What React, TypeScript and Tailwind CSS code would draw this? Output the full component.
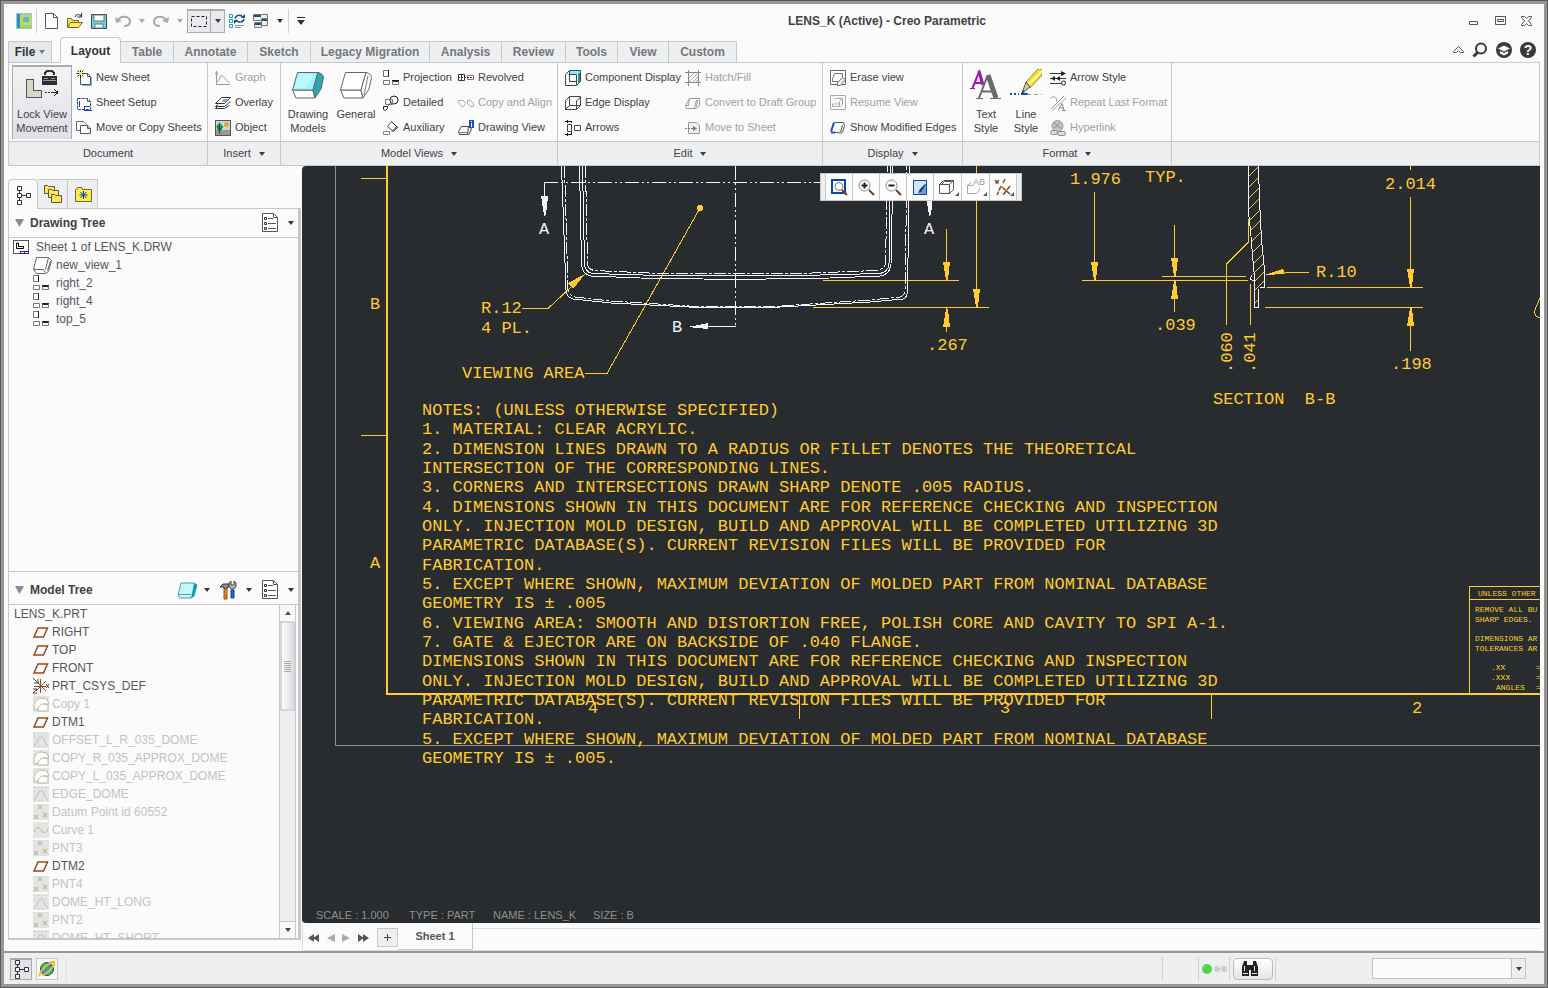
import React from "react";
import clsx from "clsx";

type IconName = keyof typeof ICONS;

/** 1 Icons, drawn on a 16 x 16 pixel grid */
const ICONS = {
    newSheet: (
        <>
            <path d="M4.500 3.500h7l3 3v8h-10z" fill="#fff" stroke="#555" />
            <path d="M11.500 3.500v3h3" fill="none" stroke="#555" />
            <path d="M6 15.500h10M15.500 7v8" stroke="#7fb0e0" />
            <path d="M0.500 3.500h8M4.500 0v8M1.500 0.500l6 6M7.500 0.500l-6 6" stroke="#222" />
            <rect x="3" y="2" width="3" height="3" fill="#ffe600" />
        </>
    ),
    sheetSetup: (
        <>
            <path d="M1.500 3.500h10l3 3v8h-13z" fill="#fff" stroke="#1d3f9e" strokeDasharray="3 1" />
            <path d="M11.500 3.500v3h3" fill="none" stroke="#555" />
            <path d="M8 15.500h8M8 11.500h6M8.500 11v4M3.500 6v6" stroke="#1d3f9e" />
        </>
    ),
    copySheets: (
        <>
            <path d="M0.500 1.500h7l3 3v6h-10z" fill="#fff" stroke="#666" />
            <path d="M4.500 5.500h7l3 3v5h-10z" fill="#fff" stroke="#555" />
            <path d="M11.500 5.500v3h3" fill="none" stroke="#555" />
        </>
    ),
    graph: (
        <path d="M1.500 1v13.500H15M0.500 4.500l1-3 1 3M2.500 12l4-7 3 3 5 5" fill="none" stroke="#999" />
    ),
    overlay: (
        <>
            <path d="M6.500 2.500h9l-6 6h-9z" fill="#fff" stroke="#333" />
            <path d="M8 4h5l-2 3H7z" fill="#72aee6" />
            <path d="M3 9.500l-2.500 2h9l6-5M2 12l-1.500 1.500h9l5-3" fill="none" stroke="#333" />
        </>
    ),
    object: (
        <>
            <rect x="0.500" y="0.500" width="15" height="15" fill="#c7d8e8" stroke="#555" />
            <rect x="1" y="10" width="14" height="5" fill="#999" />
            <circle cx="11.500" cy="4.500" r="2.500" fill="#f6a020" />
            <path d="M4.500 2l3 4-1 5h-4l-1-5z" fill="#27a844" />
            <path d="M4.500 4v10M2 6l3 4 3-4" stroke="#0a5c20" fill="none" />
        </>
    ),
    projection: (
        <>
            <path d="M0.500 0.500h5v6h-5zM0.500 10.500h6v4h-6z" fill="#fff" stroke="#777" />
            <path d="M5.500 0v7M9 10.500h7M9 11.500h7" stroke="#222" />
            <path d="M9.500 11v3.500h6V11" fill="none" stroke="#777" />
        </>
    ),
    detailed: (
        <>
            <circle cx="11" cy="5" r="4" fill="none" stroke="#222" />
            <path d="M2.500 4.500h7v5h-7z" fill="none" stroke="#777" />
            <path d="M0.500 11.500h4v2l-2 2-2-1z" fill="#fff" stroke="#222" />
            <path d="M5 11l3-3" stroke="#777" />
        </>
    ),
    auxiliary: (
        <>
            <path d="M4.500 6.500l4-5 6 6-4 4z" fill="#fff" stroke="#444" />
            <path d="M9 11.500l5-5M8.500 1.500l6 6" stroke="#222" />
            <path d="M0.500 11.500h6v3h-6z" fill="#fff" stroke="#888" />
        </>
    ),
    revolved: (
        <>
            <path d="M0.500 4.500h6v6h-6z" fill="#fff" stroke="#333" />
            <path d="M3.500 4v7" stroke="#333" />
            <path d="M9.500 5.500h6v4h-6z" fill="#fff" stroke="#777" />
            <path d="M0 7.500h16" stroke="#8a1a1a" strokeDasharray="2 1" />
        </>
    ),
    copyAlign: (
        <path d="M0.500 5.500h5l2 3-2 3h-2l-3-4zM9.500 5.500h3l3 3v3h-3l-3-3z" fill="none" stroke="#aaa" />
    ),
    drawingView: (
        <>
            <path d="M3.500 6.500h7l-1 8h-8l-1-3zM10.500 6.500l3 2-2 5-2 1" fill="#fff" stroke="#444" />
            <path d="M0 12.500h9" stroke="#777" />
            <rect x="11" y="0" width="5" height="8" fill="#1d4fc4" />
            <path d="M13.500 1v1M13.500 3v4" stroke="#fff" />
        </>
    ),
    component: (
        <>
            <path d="M4 1h12v3H4z" fill="#7ff3f7" />
            <path d="M13 3h2v9l-2 2z" fill="#0d9aa0" />
            <path d="M0.500 4.500l4-4h11v11l-4 4h-11zM4.500 0.500v11h7M3.500 4.500h8v11" fill="none" stroke="#444" />
        </>
    ),
    edge: (
        <path d="M0.500 5.500l4-4h11v9l-4 4h-11zM4.500 1.500v9h11M4.500 10.500l-4 4M11.500 14V6l4-4" fill="none" stroke="#444" />
    ),
    arrows: (
        <>
            <path d="M2.500 4.500h4v7h-4zM9.500 5.500h6v5h-6z" fill="#fff" stroke="#444" />
            <path d="M0 1.500h7M0 14.500h7M2.500 0v3M2.500 13v3M6.500 1v2M6.500 12v2" stroke="#111" />
        </>
    ),
    hatch: (
        <>
            <path d="M0 2.500h16M0 12.500h16M3.500 0v16M13.500 0v16" stroke="#888" />
            <path d="M4 8l5-5M4 12l9-9M8 12l5-5M11 12l2-2" stroke="#aaa" />
        </>
    ),
    draft: (
        <path d="M4.500 3.500h10v7l-3 3H1.500l-1-3zM4.500 3.500l-1 7H0.500M9.500 13l2-8M12.500 5l-1 7" fill="none" stroke="#999" />
    ),
    moveSheet: (
        <>
            <path d="M3.500 2.500h8l3 3v8h-11z" fill="#f0f0f0" stroke="#999" />
            <path d="M0 8.500h9" stroke="#777" strokeDasharray="2 1" />
            <path d="M8 6v5l4-2.500z" fill="#777" />
        </>
    ),
    erase: (
        <>
            <path d="M0.500 0.500h15v14h-15z" fill="#fff" stroke="#666" />
            <path d="M4.500 3.500h8v6l-2 2H2.500V9z" fill="none" stroke="#777" />
            <path d="M7.500 12.500l5-5 3 2-5 6h-3z" fill="#e8eef6" stroke="#66758c" />
        </>
    ),
    resume: (
        <path d="M0.500 0.500h15v14h-15zM4.500 3.500h8v6l-2 2H2.500V9h7M12.500 3.500l-3 3v5" fill="#fafafa" stroke="#aaa" />
    ),
    modified: (
        <>
            <path d="M4.500 2.500h9l1 3-2 7-3 1M1.500 12.500h8M10.500 12l2-7" fill="none" stroke="#555" />
            <path d="M4 2.500l-3 9M1 12.500h4" stroke="#1d4fc4" strokeWidth="2" />
        </>
    ),
    arrowStyle: (
        <>
            <path d="M0 3.500h14M0 8.500h16M0 13.500h11" stroke="#333" />
            <path d="M11 1l5 2.500-5 2.500zM1 8.500L5 6v5zM6 8.500L10 6v5z" fill="#222" />
            <circle cx="13.500" cy="13" r="2" fill="#fff" stroke="#222" />
        </>
    ),
    repeat: (
        <>
            <path d="M0.500 3.500l3-2 3 2v3M1 14l13-13M3 15L16 3" fill="none" stroke="#999" />
            <path d="M8 15.500l4-7 2 7M10 13h4M12 15.500h4" stroke="#888" fill="none" />
        </>
    ),
    hyperlink: (
        <>
            <circle cx="7.500" cy="6" r="5.500" fill="#c4c4c4" stroke="#999" />
            <path d="M4 3l3 2 3-2M4 8l3-2 4 2" stroke="#888" fill="none" />
            <rect x="0.500" y="10.500" width="7" height="4" rx="2" fill="#ddd" stroke="#888" />
            <rect x="7.500" y="11.500" width="8" height="4" rx="2" fill="#ddd" stroke="#888" />
        </>
    ),
    sheetRoot: (
        <>
            <rect x="0.500" y="1.500" width="15" height="13" fill="#fff" stroke="#555" />
            <path d="M3.500 4v5.500h7V7.500H5.500V4z" fill="none" stroke="#000" />
            <path d="M7 12.500h9M7.500 12v3M11.500 12v3M7 14.500h9" stroke="#1c20c0" />
        </>
    ),
    view: (
        <path d="M3.500 0.500h12l3 3-3 11-3 2h-9l-3-4zM0.500 12.500h10l2 3M15.500 0.500l-3 12M17.500 4.500l-3 9" fill="#fff" stroke="#666" />
    ),
    plane: (
        <path d="M5 4h9.500l-4 9H1z" fill="none" stroke="#9a4a1a" strokeWidth="1.500" />
    ),
    csys: (
        <>
            <path d="M7.500 1v14M1 8.500h12M3 3l10 10M13 3L3 13" stroke="#9a4a1a" />
            <path d="M0 0l5 5M5 1v4H1M13 6l3 4M16 6l-3 4M0 11h4l-4 4h4" stroke="#444" fill="none" />
        </>
    ),
    copy: (
        <>
            <rect width="16" height="16" fill="#e4e4e4" />
            <path d="M1 9c1-4 4-7 7-7l6 1 2 5-6 0-5 5-4 1z" fill="#fff" stroke="#b9b7a4" />
            <path d="M5 15c0-5 3-7 6-7l4 1v6z" fill="#fff" stroke="#b9b7a4" />
        </>
    ),
    offset: (
        <>
            <rect width="16" height="16" fill="#e4e4e4" />
            <path d="M1 13c4 0 3-8 7-8s3 8 7 8" fill="none" stroke="#c0bea6" />
            <path d="M1 1.500h15M1 5.500h3M12 5.500h4M1 14.500h15" stroke="#c8c6b4" strokeDasharray="1 3" />
        </>
    ),
    point: (
        <>
            <rect width="16" height="16" fill="#e4e4e4" />
            <path d="M5 1l4 4M9 1L5 5M1 11l4 4M5 11l-4 4M10 9l4 4M14 9l-4 4" stroke="#c0bea6" strokeWidth="1.500" />
        </>
    ),
    curve: (
        <>
            <rect width="16" height="16" fill="#e4e4e4" />
            <path d="M1 10c4-7 6-4 8-1s4 2 6-2" fill="none" stroke="#b9b79c" />
        </>
    ),
    appLogo: (
        <>
            <rect width="16" height="16" fill="#9cc7d8" />
            <path d="M1 1h3v14H1z" fill="#2f8fb6" />
            <rect x="4" y="2" width="11" height="10" fill="#c6dc3a" />
            <rect x="7" y="4" width="6" height="5" fill="#5fb4dc" />
            <path d="M4 13h11v2H4z" fill="#a9d24a" />
        </>
    ),
    newFile: (
        <>
            <path d="M2.500 0.500h8l4 4v11h-12z" fill="#fff" stroke="#555" />
            <path d="M10.500 0.500v4h4" fill="none" stroke="#555" />
        </>
    ),
    open: (
        <>
            <path d="M0.500 14V5.500h4l1 2h6v3" fill="#ffe45c" stroke="#7a6a10" />
            <path d="M3.500 9.500h12l-4 5h-11z" fill="#ffec70" stroke="#7a6a10" />
            <path d="M8 4c1-3 4-3 6-1M14.500 0v4h-4" fill="none" stroke="#222" />
        </>
    ),
    save: (
        <>
            <path d="M0.500 1.500h15v14h-15z" fill="#62d7e4" stroke="#444" />
            <rect x="3" y="2" width="10" height="6" fill="#fff" stroke="#777" />
            <rect x="4" y="11" width="8" height="4" fill="#fff" stroke="#777" />
        </>
    ),
    undo: (
        <>
            <path d="M3 7c3-5 11-4 12 1 0 3-2 5-6 5" fill="none" stroke="#aaa" strokeWidth="2" />
            <path d="M0 4l1 6 6-2z" fill="#aaa" />
        </>
    ),
    redo: (
        <>
            <path d="M13 7C10 2 2 3 1 8c0 3 2 5 6 5" fill="none" stroke="#aaa" strokeWidth="2" />
            <path d="M16 4l-1 6-6-2z" fill="#aaa" />
        </>
    ),
    select: (
        <path d="M0.500 3.500h15v10h-15z" fill="none" stroke="#222" strokeDasharray="3 2" />
    ),
    regenerate: (
        <>
            <path d="M0.500 1.500h3v3h-3zM0.500 6.500h3v3h-3zM0.500 11.500h3v3h-3z" fill="none" stroke="#1fa5b0" />
            <path d="M6 5.500c1-4 6-4 8-1M15 6c-1 4-6 4-8 1" fill="none" stroke="#12489e" strokeWidth="1.500" />
            <path d="M12 5h4V1zM9 7H5v4z" fill="#12489e" />
            <path d="M6 12.500h9M6 14.500h6" stroke="#888" />
        </>
    ),
    windows: (
        <>
            <path d="M0.500 1.500h14v6h-14zM1.500 9.500h7v5h-7zM8.500 5.500h6v7h-6z" fill="#f4f0d8" stroke="#777" />
            <path d="M1 3h7M2 11h6M9 7h5" stroke="#1b4d9b" strokeWidth="2" />
        </>
    ),
    treeTab: (
        <path d="M2.500 -0.500h4v4h-4zM2.500 6.500h4v4h-4zM2.500 13.500h4v4h-4zM11.500 6.500h4v4h-4zM4.500 4v3M4.500 10v4M7 8.500h4" fill="#fff" stroke="#333" />
    ),
    settings: (
        <>
            <path d="M0.500 -1.500h11l4 4v14h-15z" fill="#fff" stroke="#555" />
            <path d="M11.500 -1.500v4h4M6 3.500h5M6 8.500h8M6 13.500h8" fill="none" stroke="#555" />
            <path d="M2.500 2.500h2v2h-2zM2.500 7.500h2v2h-2zM2.500 12.500h2v2h-2z" fill="none" stroke="#333" />
        </>
    ),
    shaded: (
        <>
            <path d="M3 1h13l3 2-3 11-3 2H2l-2-3z" fill="#c4f7fb" stroke="#4b9aa8" />
            <path d="M16 1l3 2-3 11-3 2 1-4z" fill="#0f9da8" />
            <path d="M0 12.500h13" stroke="#5aa0ac" />
        </>
    ),
    tools: (
        <>
            <path d="M0 5l3-3h6v3H7v2H4V5z" fill="#8a949c" stroke="#333" />
            <path d="M4 7h3v10H4z" fill="#e88a1c" stroke="#9a4a10" />
            <path d="M11 -1v4h3V-1l2 2v3l-2 3h-3L9 4V1z" fill="#b0b8be" stroke="#444" />
            <path d="M11 8h3v8h-3z" fill="#1d6fc4" stroke="#123e80" />
        </>
    ),
    folders: (
        <>
            <path d="M-0.500 7.500v-8h3l1 1h6v7z" fill="#ffe94a" stroke="#555" />
            <path d="M3.500 11.500v-8h3l1 1h6v7z" fill="#ffe94a" stroke="#555" />
            <path d="M6.500 16.500v-8h3l1 1h6v7z" fill="#ffe94a" stroke="#555" />
        </>
    ),
    favorites: (
        <>
            <path d="M0.500 15.500v-12h1l1-2h4l1 2h9v12z" fill="#ffee3c" stroke="#666" />
            <path d="M8.500 5v8M4.500 9h8M5.500 6l6 6M11.500 6l-6 6" stroke="#0a3bb4" />
        </>
    ),
    globe: (
        <>
            <circle cx="8" cy="8" r="6.500" fill="#2f8fd8" stroke="#1a5a4a" />
            <path d="M3 4l4-2 2 3-3 4-3 1zM8 8l5 1-1 4-4 1z" fill="#3fc25a" />
            <path d="M1 15C-1 11 11 0 15 1c2 3-8 13-12 13" fill="none" stroke="#eebc20" strokeWidth="2" />
        </>
    ),
    find: (
        <>
            <path d="M2 0h3v4h2v11H0V6zM11 0h3l2 6v9H9V4h2z" fill="#222" />
            <path d="M6 4h4v5H6z" fill="#222" />
            <path d="M2.500 5v5M12.500 5v5M1 12.500h5M10 12.500h5" stroke="#f0ead0" />
        </>
    ),
    zoomWindow: (
        <>
            <rect x="1" y="1" width="13" height="13" fill="#fff" stroke="#0d47a1" strokeWidth="2" />
            <circle cx="8" cy="7.500" r="4" fill="#fff" stroke="#777" />
            <path d="M11 11l5 5" stroke="#7a3a1a" strokeWidth="2" />
        </>
    ),
    zoomIn: (
        <>
            <circle cx="6.500" cy="6.500" r="5.500" fill="#fff" stroke="#888" />
            <path d="M3.500 6.500h6M6.500 3.500v6" stroke="#222" strokeWidth="2" />
            <path d="M11 11l5 5" stroke="#7a3a1a" strokeWidth="2" />
        </>
    ),
    zoomOut: (
        <>
            <circle cx="6.500" cy="6.500" r="5.500" fill="#fff" stroke="#888" />
            <path d="M3.500 6.500h6" stroke="#222" strokeWidth="2" />
            <path d="M11 11l5 5" stroke="#7a3a1a" strokeWidth="2" />
        </>
    ),
    repaint: (
        <>
            <rect x="1.500" y="1.500" width="13" height="14" fill="#d4e6f8" stroke="#0d47a1" />
            <path d="M14 7v8H6z" fill="#6c9fd8" />
            <path d="M6 14l2-4 5-5 1 1-5 7z" fill="#123e80" />
        </>
    ),
    displayStyle: (
        <path d="M0.500 5.500h10v9h-10zM0.500 5.500l4-4h10l-4 4M14.500 1.500v9l-4 4M2.500 5.500l3-3h7" fill="none" stroke="#555" />
    ),
    annotation: (
        <path d="M0.500 14.500v-8l4-3M0.500 14.500h9l3-3v-2M0.500 6.500h6" fill="none" stroke="#aaa" />
    ),
    datum: (
        <path d="M0 1l4 4M4 1L0 5M10 0L8 4M6 7l-4 9M7 8l9 8M15 7L8 16" fill="none" stroke="#8a4420" strokeWidth="1.500" strokeDasharray="5 1" />
    ),
};

const Icon: React.FC<{name: IconName; className?: string}> = ({name, className}) => (
    <svg
        viewBox="0 0 16 16"
        className={clsx("size-4 shrink-0 overflow-visible", className)}
        aria-hidden="true"
    >
        {ICONS[name]}
    </svg>
);

const Caret: React.FC<{className?: string}> = ({className}) => (
    <svg viewBox="0 0 6 4" className={clsx("h-1 w-1.5 shrink-0", className ?? "text-[#3a3d42]")} aria-hidden="true">
        <path d="M0 0h6L3 4z" fill="currentColor" />
    </svg>
);

/** 2 Window header */
const QuickAccess: React.FC = () => (
    <div className="flex items-center">
        <Icon name="appLogo" />
        <span className="ml-1 mr-0.5 h-6 w-px bg-[#cfd1d4]" />
        <QuickButton icon="newFile" label="New" />
        <QuickButton icon="open" label="Open" />
        <QuickButton icon="save" label="Save" />
        <QuickButton icon="undo" label="Undo" />
        <QuickCaret label="Undo list" disabled />
        <QuickButton icon="redo" label="Redo" />
        <QuickCaret label="Redo list" disabled />
        <div className="flex h-6 w-[38px] border border-t-2 border-[#a9abae] bg-[#e9eaed]">
            <button type="button" aria-label="Select" className="flex w-[23px] items-center justify-center border-r border-[#a9abae]">
                <Icon name="select" />
            </button>
            <button type="button" aria-label="Select options" className="flex flex-1 items-center justify-center">
                <Caret />
            </button>
        </div>
        <QuickButton icon="regenerate" label="Regenerate" />
        <QuickButton icon="windows" label="Windows" />
        <QuickCaret label="Window list" />
        <span className="ml-px h-6 w-px bg-[#cfd1d4]" />
        <button type="button" aria-label="Customize" className="flex w-6 flex-col items-center gap-0.5">
            <span className="h-px w-2 bg-[#333]" />
            <svg viewBox="0 0 8 5" className="h-[5px] w-2" aria-hidden="true">
                <path d="M0 0h8L4 5z" fill="#333" />
            </svg>
        </button>
    </div>
);

const QuickButton: React.FC<{icon: IconName; label: string}> = ({icon, label}) => (
    <button type="button" aria-label={label} className="flex h-6 w-6 items-center justify-center">
        <Icon name={icon} />
    </button>
);

const QuickCaret: React.FC<{label: string; disabled?: boolean}> = ({label, disabled}) => (
    <button type="button" aria-label={label} className="flex h-6 w-3.5 items-center justify-center">
        <Caret className={disabled ? "text-[#aaa]" : "text-[#333]"} />
    </button>
);

const WindowControls: React.FC = () => (
    <div className="flex w-[75px] items-center justify-between pr-3">
        <button type="button" aria-label="Minimize">
            <svg viewBox="0 0 10 11" className="h-[11px] w-2.5"><path d="M0.500 6.500h8v3h-8z" fill="none" stroke="#555" /></svg>
        </button>
        <button type="button" aria-label="Maximize">
            <svg viewBox="0 0 11 9" className="h-[9px] w-[11px]"><path d="M0.500 0.500h10v8h-10zM2.500 3.500h6v2h-6z" fill="none" stroke="#555" /></svg>
        </button>
        <button type="button" aria-label="Close">
            <svg viewBox="0 0 11 10" className="h-2.5 w-[11px]">
                <path d="M0.500 0.500h3l2 2 2-2h3v1L7.500 5l3 3.500v1h-3l-2-2-2 2h-3v-1l3-3.500-3-3.500z" fill="none" stroke="#555" />
            </svg>
        </button>
    </div>
);

const TABS = [
    {title: "Table", width: "w-[53px]"},
    {title: "Annotate", width: "w-[74px]"},
    {title: "Sketch", width: "w-[63px]"},
    {title: "Legacy Migration", width: "w-[119px]"},
    {title: "Analysis", width: "w-[72px]"},
    {title: "Review", width: "w-[64px]"},
    {title: "Tools", width: "w-[52px]"},
    {title: "View", width: "w-[51px]"},
    {title: "Custom", width: "w-[68px]"},
];

const RibbonTabs: React.FC = () => (
    <nav className="flex h-[25px] items-end pl-1 text-xs font-bold">
        <button type="button" className="mr-2 flex h-[21px] w-11 items-center justify-center gap-1 border border-b-0 border-[#c6c9cc] bg-[#e6e8eb] text-[#333]">
            File
            <Caret className="text-[#777]" />
        </button>
        <button type="button" className="relative -mb-px h-[26px] w-[61px] rounded-t-sm border border-b-0 border-[#c6c9cc] bg-[#fbfbfb] text-[#333]">
            Layout
        </button>
        {TABS.map((tab) => (
            <button
                key={tab.title}
                type="button"
                className={clsx("h-[21px] border-r border-t border-[#c6c9cc] bg-[#eeeff1] whitespace-nowrap text-[#74787d]", tab.width)}
            >
                {tab.title}
            </button>
        ))}
        <div className="ml-auto flex h-full items-center gap-2 pr-2">
            <button type="button" aria-label="Minimize the ribbon">
                <svg viewBox="0 0 11 7" className="h-[7px] w-[11px]"><path d="M0.500 5.500l5-5 5 5v1h-3l-2-2-2 2h-3z" fill="none" stroke="#555" /></svg>
            </button>
            <button type="button" aria-label="Search">
                <svg viewBox="0 0 16 16" className="size-4">
                    <circle cx="9" cy="6.500" r="5" fill="#f4f8fc" stroke="#3a3a3c" strokeWidth="2" />
                    <path d="M5.500 10.500L1.500 14.500" stroke="#3a3a3c" strokeWidth="3" />
                </svg>
            </button>
            <button type="button" aria-label="Learning Connector">
                <svg viewBox="0 0 16 16" className="size-4">
                    <circle cx="8" cy="8" r="8" fill="#3a3a3c" />
                    <path d="M2 6.500l6-3 6 3-6 3zM4 9l4 2 4-2v2.500l-4 2-4-2z" fill="#fff" />
                </svg>
            </button>
            <button type="button" aria-label="Help" className="flex size-4 items-center justify-center rounded-full bg-[#3a3a3c] text-sm leading-4 text-white">
                ?
            </button>
        </div>
    </nav>
);

/** 3 Ribbon */
const Command: React.FC<{icon: IconName; disabled?: boolean; children: string}> = ({icon, disabled, children}) => (
    <button
        type="button"
        disabled={disabled}
        className={clsx("flex h-[25px] items-center gap-1 whitespace-nowrap", disabled ? "text-[#9fa1a4]" : "text-[#3f4146]")}
    >
        <Icon name={icon} />
        {children}
    </button>
);

const LargeCommand: React.FC<{icon: React.ReactNode; lines: string[]; className: string}> = ({icon, lines, className}) => (
    <button type="button" className={clsx("flex h-[74px] flex-col items-center gap-1.5 text-[#3f4146]", className)}>
        {icon}
        <span className="flex flex-col whitespace-nowrap leading-[14px]">
            {lines.map((line) => <span key={line}>{line}</span>)}
        </span>
    </button>
);

const Group: React.FC<{title: string; menu?: boolean; className?: string; children: React.ReactNode}> = ({title, menu, className, children}) => (
    <section className={clsx("flex flex-col border-r border-[#c6c9cc]", className)}>
        <div className="flex h-[78px] pt-0.5">{children}</div>
        <div className="flex h-6 items-center justify-center gap-2 border-t border-[#c6c9cc] bg-[#eeeff1] text-[#3f4146]">
            {title}
            {menu && <Caret />}
        </div>
    </section>
);

const LockIcon: React.FC = () => (
    <svg viewBox="0 0 32 32" className="size-8" shapeRendering="crispEdges" aria-hidden="true">
        <path d="M0.500 10.500h7v11h8v7h-15z" fill="#d9d7c6" stroke="#555" />
        <path d="M19 6V4l2-2h5l2 2v2" fill="none" stroke="#333" strokeWidth="2" />
        <path d="M16 7h15v9H16z" fill="#2e2e2e" />
        <path d="M17 11.500h13M18 9.500h4M25 9.500h4" stroke="#999" />
        <path d="M19 23.500h7" stroke="#333" strokeDasharray="2 1" />
        <path d="M26 23.500h6M28 20l4 3.500-4 3.500" stroke="#222" fill="none" />
    </svg>
);

const SolidIcon: React.FC<{filled?: boolean}> = ({filled}) => (
    <svg viewBox="0 0 32 32" className="size-8" aria-hidden="true">
        <path d="M0.500 21H21l2 8H4z" fill="#fff" stroke="#666" />
        <path d="M5.500 3.500H26L21 21H0.500z" fill={filled ? "#9df5fb" : "#fff"} stroke="#666" />
        <path d="M26 3.500q5 1 5.500 5L29 20l-6 9-2-8z" fill={filled ? "#2ba7b2" : "#fff"} stroke="#666" />
        <path d="M7 5h16l-9 14H3z" fill={filled ? "#b9f9fd" : "none"} />
        {!filled && <path d="M28 7l-4 19" stroke="#777" />}
    </svg>
);

const TextStyleIcon: React.FC = () => (
    <svg viewBox="0 0 32 32" className="size-8" aria-hidden="true">
        <path d="M2.500 19L9 3l3 12M4 14h8" fill="none" stroke="#a018b4" strokeWidth="2" />
        <path d="M9 2l4 14" stroke="#a018b4" strokeWidth="3" />
        <path d="M0 19.500h5" stroke="#a018b4" />
        <path d="M9 29L17 8M12 22.500h10" fill="none" stroke="#6a6a6a" strokeWidth="2" />
        <path d="M18 6l8 23" stroke="#6a6a6a" strokeWidth="5" />
        <path d="M6 29.500h7M20 29.500h11" stroke="#6a6a6a" />
    </svg>
);

const LineStyleIcon: React.FC = () => (
    <svg viewBox="0 0 32 32" className="size-8" aria-hidden="true">
        <path d="M0 25h9" stroke="#1246b4" strokeWidth="2" strokeDasharray="2 2" />
        <path d="M11 25h7" stroke="#1246b4" strokeWidth="2" />
        <path d="M17 25.500h15" stroke="#999" strokeDasharray="4 3" />
        <path d="M16 13L28 0h4v6L20 19z" fill="#f5e02c" stroke="#a08a10" />
        <path d="M19 15L32 2" stroke="#fff9a8" strokeWidth="2" />
        <path d="M12 24l4-11 4 5z" fill="#d8c8b8" stroke="#555" />
        <path d="M11 25l2-4 2 2z" fill="#444" />
    </svg>
);

const Ribbon: React.FC = () => (
    <div className="mx-1 flex border border-[#c6c9cc] bg-[#fbfbfb] text-[11px]">
        <Group title="Document" className="w-[199px]">
            <LargeCommand
                icon={<LockIcon />}
                lines={["Lock View", "Movement"]}
                className="ml-[3px] mr-1 w-[60px] border border-b-0 border-t-2 border-[#a9abae] bg-linear-to-b from-[#f3f3f5] to-[#dfe0e6] pt-0.5"
            />
            <div>
                <Command icon="newSheet">New Sheet</Command>
                <Command icon="sheetSetup">Sheet Setup</Command>
                <Command icon="copySheets">Move or Copy Sheets</Command>
            </div>
        </Group>
        <Group title="Insert" menu className="w-[73px]">
            <div className="pl-[7px]">
                <Command icon="graph" disabled>Graph</Command>
                <Command icon="overlay">Overlay</Command>
                <Command icon="object">Object</Command>
            </div>
        </Group>
        <Group title="Model Views" menu className="w-[277px]">
            <LargeCommand icon={<SolidIcon filled />} lines={["Drawing", "Models"]} className="ml-[3px] w-12 pt-1" />
            <LargeCommand icon={<SolidIcon />} lines={["General"]} className="mr-[3px] w-12 pt-1" />
            <div className="w-[75px]">
                <Command icon="projection">Projection</Command>
                <Command icon="detailed">Detailed</Command>
                <Command icon="auxiliary">Auxiliary</Command>
            </div>
            <div>
                <Command icon="revolved">Revolved</Command>
                <Command icon="copyAlign" disabled>Copy and Align</Command>
                <Command icon="drawingView">Drawing View</Command>
            </div>
        </Group>
        <Group title="Edit" menu className="w-[265px]">
            <div className="w-[127px] pl-[7px]">
                <Command icon="component">Component Display</Command>
                <Command icon="edge">Edge Display</Command>
                <Command icon="arrows">Arrows</Command>
            </div>
            <div>
                <Command icon="hatch" disabled>Hatch/Fill</Command>
                <Command icon="draft" disabled>Convert to Draft Group</Command>
                <Command icon="moveSheet" disabled>Move to Sheet</Command>
            </div>
        </Group>
        <Group title="Display" menu className="w-[140px]">
            <div className="pl-[7px]">
                <Command icon="erase">Erase view</Command>
                <Command icon="resume" disabled>Resume View</Command>
                <Command icon="modified">Show Modified Edges</Command>
            </div>
        </Group>
        <Group title="Format" menu className="w-[209px]">
            <LargeCommand icon={<TextStyleIcon />} lines={["Text", "Style"]} className="ml-[3px] w-10 pt-1" />
            <LargeCommand icon={<LineStyleIcon />} lines={["Line", "Style"]} className="mr-1 w-10 pt-1" />
            <div>
                <Command icon="arrowStyle">Arrow Style</Command>
                <Command icon="repeat" disabled>Repeat Last Format</Command>
                <Command icon="hyperlink" disabled>Hyperlink</Command>
            </div>
        </Group>
        <div className="flex flex-1 flex-col justify-end">
            <div className="h-6 border-t border-[#c6c9cc] bg-[#eeeff1]" />
        </div>
    </div>
);

/** 4 Navigator */
type TreeItem = {icon: IconName; title: string};

const DRAWING_TREE: TreeItem[] = [
    {icon: "view", title: "new_view_1"},
    {icon: "projection", title: "right_2"},
    {icon: "projection", title: "right_4"},
    {icon: "projection", title: "top_5"},
];

const MODEL_TREE: TreeItem[] = [
    {icon: "plane", title: "RIGHT"},
    {icon: "plane", title: "TOP"},
    {icon: "plane", title: "FRONT"},
    {icon: "csys", title: "PRT_CSYS_DEF"},
    {icon: "copy", title: "Copy 1"},
    {icon: "plane", title: "DTM1"},
    {icon: "offset", title: "OFFSET_L_R_035_DOME"},
    {icon: "copy", title: "COPY_R_035_APPROX_DOME"},
    {icon: "copy", title: "COPY_L_035_APPROX_DOME"},
    {icon: "offset", title: "EDGE_DOME"},
    {icon: "point", title: "Datum Point id 60552"},
    {icon: "curve", title: "Curve 1"},
    {icon: "point", title: "PNT3"},
    {icon: "plane", title: "DTM2"},
    {icon: "point", title: "PNT4"},
    {icon: "offset", title: "DOME_HT_LONG"},
    {icon: "point", title: "PNT2"},
    {icon: "offset", title: "DOME_HT_SHORT"},
];

/** Suppressed features are greyed out */
const SUPPRESSED: IconName[] = ["copy", "offset", "point", "curve"];

const PaneHeader: React.FC<{title: string; className?: string; children: React.ReactNode}> = ({title, className, children}) => (
    <div className={clsx("flex items-center border-y border-[#c6c9cc] pl-1.5", className)}>
        <svg viewBox="0 0 9 8" className="mr-1.5 h-2 w-[9px]" aria-hidden="true"><path d="M0 0h9L4.500 8z" fill="#8a8c90" /></svg>
        <h2 className="flex-1 text-xs font-bold text-[#3f4146]">{title}</h2>
        {children}
    </div>
);

const HeaderMenu: React.FC<{icon: IconName; label: string}> = ({icon, label}) => (
    <button type="button" aria-label={label} className="flex w-[42px] items-center gap-2.5 pl-1.5">
        <Icon name={icon} />
        <Caret className="text-[#333]" />
    </button>
);

const Navigator: React.FC = () => (
    <aside className="flex w-[298px] shrink-0 flex-col pb-[11px] pl-1 pt-[13px]">
        <div className="flex h-[29px]">
            <button type="button" aria-label="Model Tree" className="relative -mb-px flex w-[30px] items-center justify-center rounded-t-sm border border-b-0 border-[#c6c9cc] bg-[#fbfbfb]">
                <Icon name="treeTab" className="size-3.5" />
            </button>
            <button type="button" aria-label="Folder Browser" className="flex w-[30px] items-center justify-center border-r border-t border-[#c6c9cc] bg-[#eeeff1]">
                <Icon name="folders" />
            </button>
            <button type="button" aria-label="Favorites" className="flex w-[30px] items-center justify-center border-r border-t border-[#c6c9cc] bg-[#eeeff1]">
                <Icon name="favorites" />
            </button>
        </div>
        <div className="mr-px flex min-h-0 flex-1 flex-col border-b-2 border-l border-r-3 border-[#c6c9cc] text-xs text-[#55575c]">
            <PaneHeader title="Drawing Tree" className="h-[30px]">
                <HeaderMenu icon="settings" label="Drawing tree settings" />
            </PaneHeader>
            <div className="min-h-0 flex-1 basis-0 overflow-hidden">
                <div className="flex h-[18px] items-center gap-[7px] pl-1">
                    <Icon name="sheetRoot" />
                    Sheet 1 of LENS_K.DRW
                </div>
                <ul>
                    {DRAWING_TREE.map((item) => (
                        <li key={item.title} className="flex h-[18px] items-center gap-[7px] pl-6">
                            <Icon name={item.icon} />
                            {item.title}
                        </li>
                    ))}
                </ul>
            </div>
            <PaneHeader title="Model Tree" className="h-[34px] pt-[3px]">
                <HeaderMenu icon="shaded" label="Show" />
                <HeaderMenu icon="tools" label="Tools" />
                <HeaderMenu icon="settings" label="Model tree settings" />
            </PaneHeader>
            <div className="flex min-h-0 flex-1 basis-0 overflow-hidden">
                <div className="min-w-0 flex-1">
                    <div className="flex h-[18px] items-center pl-[5px]">LENS_K.PRT</div>
                    <ul>
                        {MODEL_TREE.map((item) => (
                            <li
                                key={item.title}
                                className={clsx("flex h-[18px] items-center gap-[3px] whitespace-nowrap pl-6", SUPPRESSED.includes(item.icon) && "text-[#c2c3c6]")}
                            >
                                <Icon name={item.icon} />
                                {item.title}
                            </li>
                        ))}
                    </ul>
                </div>
                <div className="mr-0.5 flex w-[17px] flex-col border-x border-[#c6c9cc] bg-[#eeeff1]">
                    <button type="button" aria-label="Scroll up" className="flex h-4 items-center justify-center bg-[#f8f8f9]">
                        <Caret className="rotate-180 text-[#555]" />
                    </button>
                    <div className="flex h-[90px] flex-col items-center justify-center gap-px border-2 border-[#d3d5d8] bg-linear-to-r from-white to-[#dcdde0]">
                        {[0, 1, 2, 3, 4, 5].map((line) => <span key={line} className="h-px w-[7px] bg-[#aaa]" />)}
                    </div>
                    <button type="button" aria-label="Scroll down" className="mt-auto flex h-[17px] items-center justify-center border-t border-[#c6c9cc] bg-[#f8f8f9]">
                        <Caret className="text-[#444]" />
                    </button>
                </div>
            </div>
        </div>
    </aside>
);

/** 5 Drawing */
const NOTES = [
    "NOTES: (UNLESS OTHERWISE SPECIFIED)",
    "1. MATERIAL: CLEAR ACRYLIC.",
    "2. DIMENSION LINES DRAWN TO A RADIUS OR FILLET DENOTES THE THEORETICAL",
    "INTERSECTION OF THE CORRESPONDING LINES.",
    "3. CORNERS AND INTERSECTIONS DRAWN SHARP DENOTE .005 RADIUS.",
    "4. DIMENSIONS SHOWN IN THIS DOCUMENT ARE FOR REFERENCE CHECKING AND INSPECTION",
    "ONLY. INJECTION MOLD DESIGN, BUILD AND APPROVAL WILL BE COMPLETED UTILIZING 3D",
    "PARAMETRIC DATABASE(S). CURRENT REVISION FILES WILL BE PROVIDED FOR",
    "FABRICATION.",
    "5. EXCEPT WHERE SHOWN, MAXIMUM DEVIATION OF MOLDED PART FROM NOMINAL DATABASE",
    "GEOMETRY IS ± .005",
    "6. VIEWING AREA: SMOOTH AND DISTORTION FREE, POLISH CORE AND CAVITY TO SPI A-1.",
    "7. GATE & EJECTOR ARE ON BACKSIDE OF .040 FLANGE.",
    "DIMENSIONS SHOWN IN THIS DOCUMENT ARE FOR REFERENCE CHECKING AND INSPECTION",
    "ONLY. INJECTION MOLD DESIGN, BUILD AND APPROVAL WILL BE COMPLETED UTILIZING 3D",
    "PARAMETRIC DATABASE(S). CURRENT REVISION FILES WILL BE PROVIDED FOR",
    "FABRICATION.",
    "5. EXCEPT WHERE SHOWN, MAXIMUM DEVIATION OF MOLDED PART FROM NOMINAL DATABASE",
    "GEOMETRY IS ± .005.",
];

/** Dimension and zone texts: x, baseline, value */
const LABELS: [number, number, string][] = [
    [481, 313, "R.12"],
    [481, 333, "4 PL."],
    [462, 378, "VIEWING AREA"],
    [927, 350, ".267"],
    [1070, 184, "1.976"],
    [1145, 182, "TYP."],
    [1155, 330, ".039"],
    [1385, 189, "2.014"],
    [1316, 277, "R.10"],
    [1391, 369, ".198"],
    [1213, 404, "SECTION\u00a0\u00a0B-B"],
    [370, 309, "B"],
    [370, 568, "A"],
    [588, 713, "4"],
    [1000, 713, "3"],
    [1412, 713, "2"],
];

const TOLERANCES: [number, number, string][] = [
    [1478, 596, "UNLESS OTHER"],
    [1475, 612, "REMOVE ALL BU"],
    [1475, 622, "SHARP EDGES."],
    [1475, 641, "DIMENSIONS AR"],
    [1475, 651, "TOLERANCES AR"],
    [1491, 670, ".XX"],
    [1536, 670, "="],
    [1491, 680, ".XXX"],
    [1536, 680, "="],
    [1496, 690, "ANGLES"],
    [1536, 690, "="],
];

const Sheet: React.FC = () => (
    <svg className="block h-full w-full font-['Liberation_Mono',monospace] text-[17px]" aria-label="LENS_K drawing">
        <g transform="translate(-302 -166)" fill="none" strokeWidth="1" shapeRendering="crispEdges">
            <g stroke="#8d8f91">
                <path d="M335.500 166V745.500H1540" />
            </g>

            <g stroke="#ffcb2f">
                <path d="M387 166V694H1540" strokeWidth="2" />
                <path d="M361 178.500h25M361 435.500h25M799.500 695v24M1211.500 695v24" />
                <path d="M823 280.500h136M813 307.500h176M946.500 229v51M946.500 308v24M976.500 166v141" />
                <path d="M522 308.500h26L585 274M585 373.500h22L700 208" />
                <path d="M1082 280.500h166M1162 276.500h84M1094.500 192v88M1174.500 225v51M1174.500 281v31" />
                <path d="M1410.500 166v4M1410.500 197v90M1410.500 307v44M1267 287.500h156M1265 307.500h158" />
                <path d="M1248.500 219v23L1226.500 264v61M1250.500 284v41M1285 272.500h24" />
                <path d="M1540 298l-6 14 2 4 4 2" />
                <path d="M1540 586.500H1469.500V693M1470 599.500h70" />
                <path d="M1249 176l9-9M1249 187l9-9M1249 198l10-10M1249 209l10-10M1250 220l10-10M1250 231l11-11M1251 242l10-10M1252 253l10-10M1253 264l10-10M1253 274l11-11M1254 282l10-10M1255 290l10-10M1255 303l4-4" />
            </g>

            <g fill="#ffcb2f">
                <circle cx="700" cy="208" r="3" />
                <path d="M943 262h7l-2 18h-2zM973 289h7l-2 18h-2zM943 327h7l-2-18h-2z" />
                <path d="M1091 262h7l-2 18h-2zM1171 258h7l-2 18h-2zM1171 299h7l-2-18h-2z" />
                <path d="M1407 269h7l-2 18h-2zM1407 326h7l-2-18h-2z" />
                <path d="M585 274l-17 9 5 6zM1265 275l18-6 2 5z" />
            </g>

            <g stroke="#f2f4ff">
                <path d="M561.500 166L566 290Q566 297 573 299L611 303 689 307H780L870 302 903 299Q907 298 907.500 290L909.500 166" />
                <path d="M564.500 166L568 290Q569 295 575 297L611 301 689 306H780L870 300 900 297Q904 296 905.500 290L906.500 166" strokeDasharray="12 2 3 2" />
                <path d="M579.500 166L581.500 264Q582 274 591 276L640 278 735 279.500 830 278 880 276Q890 275 891 264L893 166" />
                <path d="M582.500 166L584.500 264Q585 272 592 273.500L660 275.500H800L880 273.500Q888 272 889 264L890.500 166" />
                <path d="M585.500 166L587.500 264Q588 269 594 270.500L660 273.500H800L876 270.500Q884 269 885.500 264L887.500 166" strokeDasharray="12 2 3 2" />
                <path d="M735.500 166V326M544 182.500H929" strokeDasharray="14 3 2 3 2 3" />
                <path d="M544.500 182v34M929.500 182v34M735.500 326.500H690" />
                <path d="M1248.500 166v46l2 18 2 25 2 22v30h4v-18M1258.500 166l1 34 2 40 3 30v17h-5M1252 275l-2 4 4 2" />
            </g>
            <g fill="#f2f4ff">
                <path d="M541 196h7l-2 19h-2zM926 196h7l-2 19h-2zM688 327l20-4v6z" />
            </g>

            <g fill="#f2f4ff">
                <text x="539" y="234">A</text>
                <text x="924" y="234">A</text>
                <text x="672" y="332">B</text>
            </g>
            <g fill="#ffcb2f">
                {LABELS.map(([x, y, value]) => <text key={`${x}-${y}`} x={x} y={y}>{value}</text>)}
                <text transform="translate(1232 373) rotate(-90)">.060</text>
                <text transform="translate(1255 373) rotate(-90)">.041</text>
                {NOTES.map((line, index) => (
                    <text key={index} x="422" y={415 + Math.round((index * 58) / 3)}>{line}</text>
                ))}
                <g className="text-[8px]">
                    {TOLERANCES.map(([x, y, value]) => <text key={`${x}-${y}`} x={x} y={y}>{value}</text>)}
                </g>
            </g>
        </g>
    </svg>
);

const VIEW_TOOLS: {icon: IconName; label: string; menu?: boolean}[] = [
    {icon: "zoomWindow", label: "Refit"},
    {icon: "zoomIn", label: "Zoom In"},
    {icon: "zoomOut", label: "Zoom Out"},
    {icon: "repaint", label: "Repaint"},
    {icon: "displayStyle", label: "Display Style", menu: true},
    {icon: "annotation", label: "Annotation Display", menu: true},
    {icon: "datum", label: "Datum Display Filters", menu: true},
];

const ViewToolbar: React.FC = () => (
    <div className="absolute left-[518px] top-[7px] flex h-7 border border-[#c6c9cc] bg-[#eeeff1] px-1">
        {VIEW_TOOLS.map((tool) => (
            <button
                key={tool.icon}
                type="button"
                aria-label={tool.label}
                className={clsx(
                    "relative flex items-center border-l border-[#c6c9cc] bg-[#fdfdfd] pl-[5px] last:border-r",
                    tool.menu ? "w-7" : "w-[27px]",
                )}
            >
                <Icon name={tool.icon} />
                {tool.icon === "annotation" && <span className="absolute right-1 top-1 text-[9px] leading-none text-[#999]">AB</span>}
                {tool.menu && (
                    <svg viewBox="0 0 4 4" className="absolute bottom-1 right-0.5 size-1"><path d="M4 0v4H0z" fill="#555" /></svg>
                )}
            </button>
        ))}
    </div>
);

const SheetBar: React.FC = () => (
    <div className="flex h-7 items-start border-b border-[#dcdee0] text-[#55575c]">
        <div className="flex h-full w-[75px] items-center justify-between border-l border-[#dcdee0] pl-[5px] pr-2 pt-0.5">
            <button type="button" aria-label="First sheet">
                <svg viewBox="0 0 11 8" className="h-2 w-[11px]"><path d="M6 0v8L0 4zM11 0v8L5 4z" fill="#555" /></svg>
            </button>
            <button type="button" aria-label="Previous sheet">
                <svg viewBox="0 0 8 8" className="size-2"><path d="M8 0v8L0 4z" fill="#aaa" /></svg>
            </button>
            <button type="button" aria-label="Next sheet">
                <svg viewBox="0 0 8 8" className="size-2"><path d="M0 0v8l8-4z" fill="#aaa" /></svg>
            </button>
            <button type="button" aria-label="Last sheet">
                <svg viewBox="0 0 11 8" className="h-2 w-[11px]"><path d="M0 0v8l6-4zM5 0v8l6-4z" fill="#555" /></svg>
            </button>
        </div>
        <button type="button" aria-label="New sheet" className="mt-[5px] flex h-[19px] w-[21px] items-center justify-center border border-[#c6c9cc] bg-[#eeeff1]">
            <svg viewBox="0 0 7 7" className="size-[7px]"><path d="M0 3.500h7M3.500 0v7" stroke="#444" /></svg>
        </button>
        <button type="button" className="h-[27px] w-[75px] border-b border-r border-[#c6c9cc] bg-[#fbfbfb] text-[11px] font-bold">
            Sheet 1
        </button>
        <div className="mt-[5px] h-px flex-1 bg-[#dcdee0]" />
    </div>
);

const StatusBar: React.FC = () => (
    <footer className="flex h-[33px] items-center border-t-2 border-[#999696] bg-[#eeeff1] pl-1.5">
        <button type="button" aria-label="Toggle navigator" className="mr-1 flex size-[22px] items-center justify-center border border-t-2 border-[#a9abae] bg-[#e3e4e8]">
            <Icon name="treeTab" className="size-3.5" />
        </button>
        <button type="button" aria-label="Toggle browser" className="flex size-[22px] items-center justify-center border border-[#c6c9cc] bg-[#f6f6f7]">
            <Icon name="globe" />
        </button>
        <span className="ml-2 h-6 w-0.5 bg-linear-to-r from-[#cfd1d4] to-white" />
        <div className="ml-auto flex items-center pr-[18px]">
            <span className="mr-[35px] h-6 w-px bg-[#cfd1d4]" />
            <span className="mr-[3px] h-6 w-px bg-[#cfd1d4]" />
            <span className="size-2.5 rounded-full bg-[#4fd64f]" />
            <span className="ml-0.5 size-1.5 rounded-full bg-[#cdcdcd]" />
            <span className="ml-px size-1.5 rounded-full bg-[#cdcdcd]" />
            <span className="ml-0.5 mr-[3px] h-6 w-px bg-[#cfd1d4]" />
            <button type="button" aria-label="Find" className="flex h-[22px] w-10 items-center rounded-sm border border-[#b9bcc0] bg-linear-to-b from-white to-[#e3e4e7] pl-2">
                <Icon name="find" />
            </button>
            <span className="ml-0.5 h-6 w-px bg-[#cfd1d4]" />
            <div className="ml-24 flex h-[21px] w-[154px] border border-[#c0c3c7] bg-[#fbfbfb]">
                <select aria-label="Selection filter" className="min-w-0 flex-1 appearance-none" />
                <span className="flex w-3.5 items-center justify-center border-l border-[#c0c3c7] bg-[#eeeff1]">
                    <Caret />
                </span>
            </div>
        </div>
    </footer>
);

/**
 * @return {React.ReactElement} Main window of the drawing editor.
 */
const App: React.FC = () => (
    <div className="h-screen min-h-[600px] overflow-hidden border border-[#5a5757] font-['Liberation_Sans',Arial,sans-serif]">
        <div className="flex h-full flex-col border-3 border-[#999696] bg-[#fbfbfb]">
            <header className="flex h-[33px] shrink-0 items-center pl-3">
                <QuickAccess />
                <h1 className="flex-1 pr-2 text-center text-xs font-bold text-[#3f4146]">LENS_K (Active) - Creo Parametric</h1>
                <WindowControls />
            </header>
            <RibbonTabs />
            <Ribbon />
            <main className="flex min-h-0 flex-1 pr-1">
                <Navigator />
                <div className="flex min-w-0 flex-1 flex-col">
                    <div className="relative min-h-0 flex-1 overflow-hidden rounded-l bg-[#282c2e]">
                        <Sheet />
                        <ViewToolbar />
                        <div className="absolute bottom-0 left-3.5 flex text-[11px] text-[#8d8f91]">
                            <span className="w-[93px]">SCALE : 1.000</span>
                            <span className="w-[84px]">TYPE : PART</span>
                            <span className="w-[100px]">NAME : LENS_K</span>
                            <span>SIZE : B</span>
                        </div>
                    </div>
                    <SheetBar />
                </div>
            </main>
            <StatusBar />
        </div>
    </div>
);

export default App;
